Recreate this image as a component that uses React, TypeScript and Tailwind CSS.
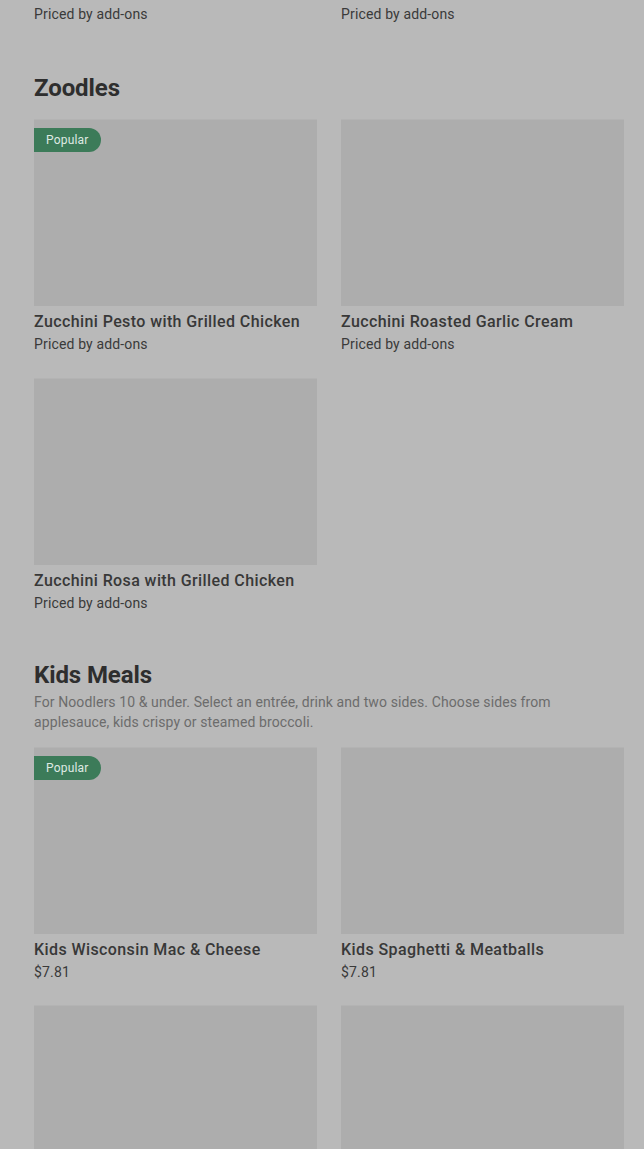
import React from 'react'

type Item = { name: string; price: string; popular?: boolean }

const ItemCard: React.FC<{ item: Item }> = ({ item }) => (
  <div className="flex flex-col">
    <div className="relative h-[187px] w-full bg-[#adadad] border-t border-[#b3b3b3]">
      {item.popular && (
        <span className="absolute left-0 top-[8px] h-[24px] px-[12px] flex items-center rounded-r-full rounded-l-[4px] bg-[#3c7b59] text-[12px] tracking-[0.2px] text-[#dfe9e3]">
          Popular
        </span>
      )}
    </div>
    <div className="mt-[4px] text-[16px] leading-[24px] font-medium tracking-[0.4px] text-[#383838]">{item.name}</div>
    <div className="mt-[-1px] text-[14px] leading-[22px] tracking-[0.15px] text-[#3a3a3a]">{item.price}</div>
  </div>
)

const Section: React.FC<{ title: string; description?: string; items: Item[]; top: string }> = ({ title, description, items, top }) => (
  <section className={top}>
    <h2 className="text-[24px] leading-[28px] font-bold tracking-[-0.1px] text-[#2e2e2e]">{title}</h2>
    {description && (
      <p className="mt-[3px] text-[14px] leading-[20px] tracking-[0.1px] text-[#6c6c6c] pr-[60px]">{description}</p>
    )}
    <div className={`grid grid-cols-2 gap-x-[24px] ${description ? 'mt-[15px] gap-y-[22px]' : 'mt-[17px] gap-y-[23px]'}`}>
      {items.map((item) => (
        <ItemCard key={item.name} item={item} />
      ))}
    </div>
  </section>
)

export default function App() {
  return (
    <div
      className="min-h-screen bg-[#b9b9b9] pl-[34px] pr-[20px] overflow-hidden"
      style={{ fontFamily: 'Roboto, "Noto Sans", sans-serif' }}
    >
      <div className="grid grid-cols-2 gap-x-[24px] mt-[-20px]">
        <div>
          <div className="text-[16px] leading-[24px] font-medium tracking-[0.4px] text-[#383838]">Penne Rosa with Grilled Chicken</div>
          <div className="mt-[-1px] text-[14px] leading-[22px] tracking-[0.15px] text-[#3a3a3a]">Priced by add-ons</div>
        </div>
        <div>
          <div className="text-[16px] leading-[24px] font-medium tracking-[0.4px] text-[#383838]">Pesto Cavatappi with Chicken</div>
          <div className="mt-[-1px] text-[14px] leading-[22px] tracking-[0.15px] text-[#3a3a3a]">Priced by add-ons</div>
        </div>
      </div>

      <Section
        top="pt-[49px]"
        title="Zoodles"
        items={[
          { name: 'Zucchini Pesto with Grilled Chicken', price: 'Priced by add-ons', popular: true },
          { name: 'Zucchini Roasted Garlic Cream', price: 'Priced by add-ons' },
          { name: 'Zucchini Rosa with Grilled Chicken', price: 'Priced by add-ons' },
        ]}
      />

      <Section
        top="pt-[47px]"
        title="Kids Meals"
        description="For Noodlers 10 & under. Select an entrée, drink and two sides. Choose sides from applesauce, kids crispy or steamed broccoli."
        items={[
          { name: 'Kids Wisconsin Mac & Cheese', price: '$7.81', popular: true },
          { name: 'Kids Spaghetti & Meatballs', price: '$7.81' },
          { name: 'Kids Buttered Noodles', price: '$7.81' },
          { name: 'Kids Chicken Noodle Soup', price: '$7.81' },
        ]}
      />
    </div>
  )
}
